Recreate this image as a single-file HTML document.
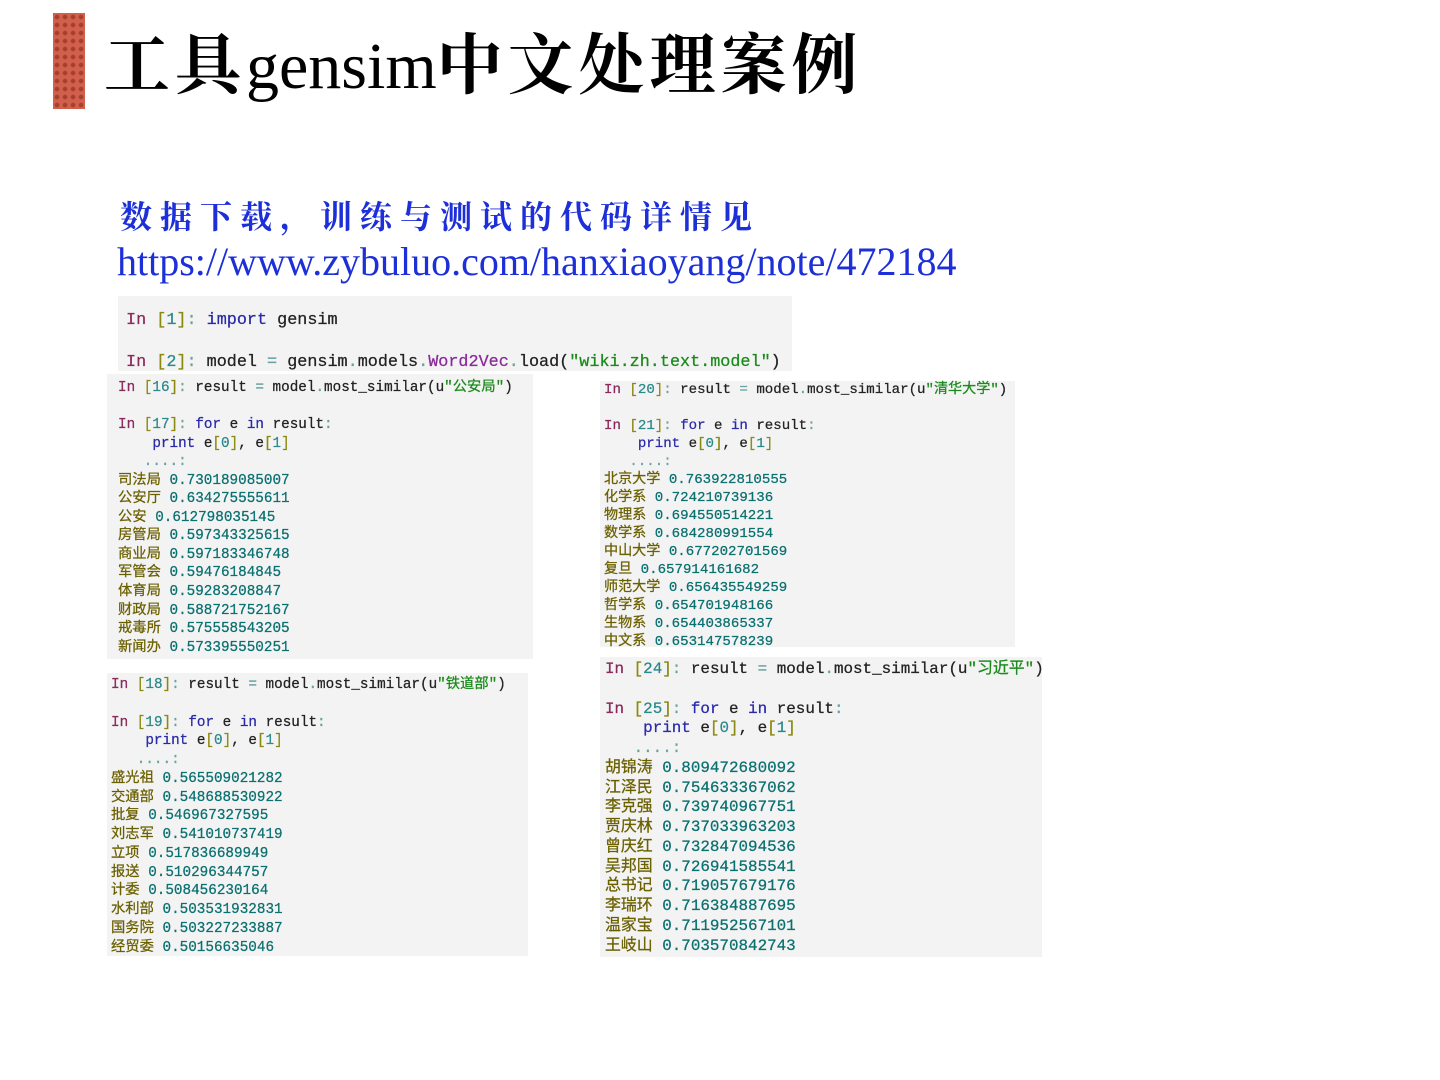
<!DOCTYPE html>
<html><head><meta charset="utf-8"><style>
body{margin:0;width:1440px;height:1080px;background:#fff;position:relative;overflow:hidden;font-family:"Liberation Sans","Noto Sans CJK SC",sans-serif}
.bar{position:absolute;left:53px;top:13px;width:32px;height:96px;background-color:#d0604c;background-image:radial-gradient(circle,#a84030 2px,transparent 2.6px);background-size:8px 8px}
.title{position:absolute;left:104px;top:22px;font-size:66px;line-height:90px;font-family:"Liberation Serif","Noto Serif CJK SC",serif;color:#000;white-space:nowrap}
.title b{font-weight:700;letter-spacing:5px}
.cn{position:absolute;left:120px;top:193px;font-size:32px;line-height:44px;color:#1c2fd8;font-family:"Noto Serif CJK SC",serif;font-weight:bold;letter-spacing:8px;white-space:nowrap}
.url{position:absolute;left:117px;top:237px;font-size:40px;line-height:50px;color:#1c2fd8;font-family:"Liberation Serif",serif;white-space:nowrap}
.box{position:absolute;background:#f3f3f3}
pre{margin:0;font-family:"Liberation Mono","Noto Sans CJK SC",monospace;color:#222;white-space:pre;position:absolute;-webkit-text-stroke:0.25px currentColor}
.i{color:#8a2a5c}.n{color:#2a8a8a}.b{color:#8a8a10}.k{color:#2a2aa8}.o{color:#6aa0a0}.s{color:#1a8a1a}.c{color:#8a2a9a}.z{color:#6b6000}.v{color:#0a7070}
</style></head><body>
<div class="bar"></div>
<div class="title"><b>工具</b>gensim<b>中文处理案例</b></div>
<div class="cn">数据下载，训练与测试的代码详情见</div>
<div class="url">https://www.zybuluo.com/hanxiaoyang/note/472184</div>

<div class="box" style="left:118px;top:296px;width:674px;height:75px"></div>
<pre style="left:126px;top:300px;font-size:16.8px;line-height:42px"><span class="i">In</span> <span class="b">[</span><span class="n">1</span><span class="b">]</span><span class="o">:</span> <span class="k">import</span> gensim
<span class="i">In</span> <span class="b">[</span><span class="n">2</span><span class="b">]</span><span class="o">:</span> model <span class="o">=</span> gensim<span class="o">.</span>models<span class="o">.</span><span class="c">Word2Vec</span><span class="o">.</span>load(<span class="s">"wiki.zh.text.model"</span>)</pre>

<div class="box" style="left:107px;top:374px;width:426px;height:285px"></div>
<pre style="left:118px;top:379px;font-size:14.3px;line-height:18.55px"><span class="i">In</span> <span class="b">[</span><span class="n">16</span><span class="b">]</span><span class="o">:</span> result <span class="o">=</span> model<span class="o">.</span>most_similar(u<span class="s">"公安局"</span>)

<span class="i">In</span> <span class="b">[</span><span class="n">17</span><span class="b">]</span><span class="o">:</span> <span class="k">for</span> e <span class="k">in</span> result<span class="o">:</span>
    <span class="k">print</span> e<span class="b">[</span><span class="n">0</span><span class="b">]</span>, e<span class="b">[</span><span class="n">1</span><span class="b">]</span>
   <span class="o">....:</span>
<span class="z">司法局</span> <span class="v">0.730189085007</span>
<span class="z">公安厅</span> <span class="v">0.634275555611</span>
<span class="z">公安</span> <span class="v">0.612798035145</span>
<span class="z">房管局</span> <span class="v">0.597343325615</span>
<span class="z">商业局</span> <span class="v">0.597183346748</span>
<span class="z">军管会</span> <span class="v">0.59476184845</span>
<span class="z">体育局</span> <span class="v">0.59283208847</span>
<span class="z">财政局</span> <span class="v">0.588721752167</span>
<span class="z">戒毒所</span> <span class="v">0.575558543205</span>
<span class="z">新闻办</span> <span class="v">0.573395550251</span></pre>

<div class="box" style="left:600px;top:381px;width:415px;height:266px"></div>
<pre style="left:604px;top:381px;font-size:14.1px;line-height:18px"><span class="i">In</span> <span class="b">[</span><span class="n">20</span><span class="b">]</span><span class="o">:</span> result <span class="o">=</span> model<span class="o">.</span>most_similar(u<span class="s">"清华大学"</span>)

<span class="i">In</span> <span class="b">[</span><span class="n">21</span><span class="b">]</span><span class="o">:</span> <span class="k">for</span> e <span class="k">in</span> result<span class="o">:</span>
    <span class="k">print</span> e<span class="b">[</span><span class="n">0</span><span class="b">]</span>, e<span class="b">[</span><span class="n">1</span><span class="b">]</span>
   <span class="o">....:</span>
<span class="z">北京大学</span> <span class="v">0.763922810555</span>
<span class="z">化学系</span> <span class="v">0.724210739136</span>
<span class="z">物理系</span> <span class="v">0.694550514221</span>
<span class="z">数学系</span> <span class="v">0.684280991554</span>
<span class="z">中山大学</span> <span class="v">0.677202701569</span>
<span class="z">复旦</span> <span class="v">0.657914161682</span>
<span class="z">师范大学</span> <span class="v">0.656435549259</span>
<span class="z">哲学系</span> <span class="v">0.654701948166</span>
<span class="z">生物系</span> <span class="v">0.654403865337</span>
<span class="z">中文系</span> <span class="v">0.653147578239</span></pre>

<div class="box" style="left:107px;top:673px;width:421px;height:283px"></div>
<pre style="left:111px;top:676px;font-size:14.3px;line-height:18.75px"><span class="i">In</span> <span class="b">[</span><span class="n">18</span><span class="b">]</span><span class="o">:</span> result <span class="o">=</span> model<span class="o">.</span>most_similar(u<span class="s">"铁道部"</span>)

<span class="i">In</span> <span class="b">[</span><span class="n">19</span><span class="b">]</span><span class="o">:</span> <span class="k">for</span> e <span class="k">in</span> result<span class="o">:</span>
    <span class="k">print</span> e<span class="b">[</span><span class="n">0</span><span class="b">]</span>, e<span class="b">[</span><span class="n">1</span><span class="b">]</span>
   <span class="o">....:</span>
<span class="z">盛光祖</span> <span class="v">0.565509021282</span>
<span class="z">交通部</span> <span class="v">0.548688530922</span>
<span class="z">批复</span> <span class="v">0.546967327595</span>
<span class="z">刘志军</span> <span class="v">0.541010737419</span>
<span class="z">立项</span> <span class="v">0.517836689949</span>
<span class="z">报送</span> <span class="v">0.510296344757</span>
<span class="z">计委</span> <span class="v">0.508456230164</span>
<span class="z">水利部</span> <span class="v">0.503531932831</span>
<span class="z">国务院</span> <span class="v">0.503227233887</span>
<span class="z">经贸委</span> <span class="v">0.50156635046</span></pre>

<div class="box" style="left:600px;top:657px;width:442px;height:300px"></div>
<pre style="left:605px;top:660px;font-size:15.9px;line-height:19.75px"><span class="i">In</span> <span class="b">[</span><span class="n">24</span><span class="b">]</span><span class="o">:</span> result <span class="o">=</span> model<span class="o">.</span>most_similar(u<span class="s">"习近平"</span>)

<span class="i">In</span> <span class="b">[</span><span class="n">25</span><span class="b">]</span><span class="o">:</span> <span class="k">for</span> e <span class="k">in</span> result<span class="o">:</span>
    <span class="k">print</span> e<span class="b">[</span><span class="n">0</span><span class="b">]</span>, e<span class="b">[</span><span class="n">1</span><span class="b">]</span>
   <span class="o">....:</span>
<span class="z">胡锦涛</span> <span class="v">0.809472680092</span>
<span class="z">江泽民</span> <span class="v">0.754633367062</span>
<span class="z">李克强</span> <span class="v">0.739740967751</span>
<span class="z">贾庆林</span> <span class="v">0.737033963203</span>
<span class="z">曾庆红</span> <span class="v">0.732847094536</span>
<span class="z">吴邦国</span> <span class="v">0.726941585541</span>
<span class="z">总书记</span> <span class="v">0.719057679176</span>
<span class="z">李瑞环</span> <span class="v">0.716384887695</span>
<span class="z">温家宝</span> <span class="v">0.711952567101</span>
<span class="z">王岐山</span> <span class="v">0.703570842743</span></pre>
</body></html>
